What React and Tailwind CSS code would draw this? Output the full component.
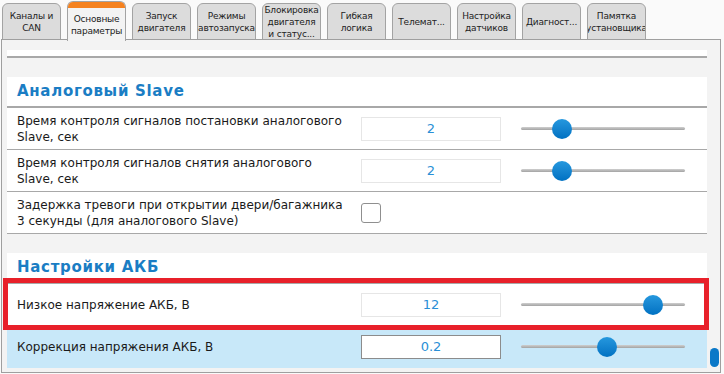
import React from 'react';

const tabs = [
  { label: ['Каналы и', 'CAN'] },
  { label: ['Основные', 'параметры'], active: true },
  { label: ['Запуск', 'двигателя'] },
  { label: ['Режимы', 'автозапуска'] },
  { label: ['Блокировка', 'двигателя', 'и статус...'] },
  { label: ['Гибкая', 'логика'] },
  { label: ['Телемат...'] },
  { label: ['Настройка', 'датчиков'] },
  { label: ['Диагност...'] },
  { label: ['Памятка', 'установщика'] },
];

const Tab = ({ label, active }) => (
  <div
    className={`w-[59px] shrink-0 flex flex-col rounded-t-[6px] border border-[#a3a3a3] overflow-hidden ${
      active ? 'h-[40px] mt-0 border-b-0 bg-[#f3f3f3] z-10' : 'h-[37px] mt-[2px] bg-[#dcdcdc]'
    }`}
  >
    {active && <div className="h-[6px] bg-[#f5821f] shrink-0" />}
    <div className="flex-1 flex flex-col items-center justify-center text-[9px] leading-[12px] tracking-[-0.2px] text-[#222] whitespace-nowrap">
      {label.map((l) => (
        <span key={l}>{l}</span>
      ))}
    </div>
  </div>
);

const Slider = ({ pos }) => (
  <div className="relative h-[20px] w-[164px] ml-[20px]">
    <div className="absolute left-0 right-0 top-[8px] h-[3px] rounded-full bg-gradient-to-b from-[#cfcfcf] to-[#a3a3a3]" />
    <div
      className="absolute top-0 h-[20px] w-[20px] rounded-full bg-gradient-to-b from-[#2598de] to-[#0071c2]"
      style={{ left: `${pos * 144}px` }}
    />
  </div>
);

const ValueBox = ({ value, dark }) => (
  <div
    className={`h-[24px] w-[140px] shrink-0 bg-white flex items-center justify-center text-[13px] text-[#2a8fd6] border ${
      dark ? 'border-[#8c8c8c]' : 'border-[#e6e6e6]'
    }`}
  >
    {value}
  </div>
);

const Row = ({ lines, value, pos, checkbox, highlight, border = true }) => (
  <div
    className={`flex items-center pl-[10px] h-[42px] ${border ? 'border-b border-[#a8a8a8]' : ''} ${
      highlight ? 'bg-[#c8e8f9]' : ''
    }`}
  >
    <div className="w-[344px] shrink-0 text-[12px] leading-[16px] text-[#1a1a1a] flex flex-col">
      {lines.map((l) => (
        <span key={l}>{l}</span>
      ))}
    </div>
    {checkbox ? (
      <div className="h-[20px] w-[20px] rounded-[3px] border border-[#8f8f8f] bg-white" />
    ) : (
      <>
        <ValueBox value={value} dark={highlight} />
        <Slider pos={pos} />
      </>
    )}
  </div>
);

const Header = ({ title }) => (
  <div className="h-[31px] pl-[10px] flex items-center border-b-2 border-[#a8a8a8]">
    <span className="text-[15px] font-bold tracking-[0.7px] text-[#1a7dc4]">{title}</span>
  </div>
);

export default function App() {
  return (
    <div
      className="w-[724px] h-[374px] bg-[#fafafa] overflow-hidden"
      style={{ fontFamily: '"DejaVu Sans", Verdana, sans-serif' }}
    >
      <div className="flex gap-[6px] pl-[2px] pt-[1px] h-[40px] relative">
        {tabs.map((t) => (
          <Tab key={t.label.join(' ')} {...t} />
        ))}
      </div>

      <div className="relative ml-[1px] w-[720px] h-[334px] -mt-px border border-[#9f9f9f] bg-[#f3f3f3] pl-[5px] pr-[13px] pt-[10px] overflow-hidden">
        <div className="h-[8px] bg-white border-b-2 border-[#a8a8a8]" />

        <div className="mt-[19px] bg-white">
          <Header title="Аналоговый Slave" />
          <Row lines={['Время контроля сигналов постановки аналогового', 'Slave, сек']} value="2" pos={0.215} />
          <Row lines={['Время контроля сигналов снятия аналогового', 'Slave, сек']} value="2" pos={0.215} />
          <Row lines={['Задержка тревоги при открытии двери/багажника', '3 секунды (для аналогового Slave)']} checkbox />
        </div>

        <div className="mt-[19px] bg-white">
          <Header title="Настройки АКБ" />
          <div className="relative">
            <Row lines={['Низкое напряжение АКБ, В']} value="12" pos={0.85} />
            <div className="absolute -left-[4px] -right-[2px] -top-[6px] -bottom-[4px] border-[5px] border-[#e8202a]" />
          </div>
          <Row lines={['Коррекция напряжения АКБ, В']} value="0.2" pos={0.53} highlight border={false} />
        </div>

        <div className="absolute right-[1px] top-[308px] h-[19px] w-[9px] rounded-full bg-[#0a78c8]" />
      </div>
    </div>
  );
}
